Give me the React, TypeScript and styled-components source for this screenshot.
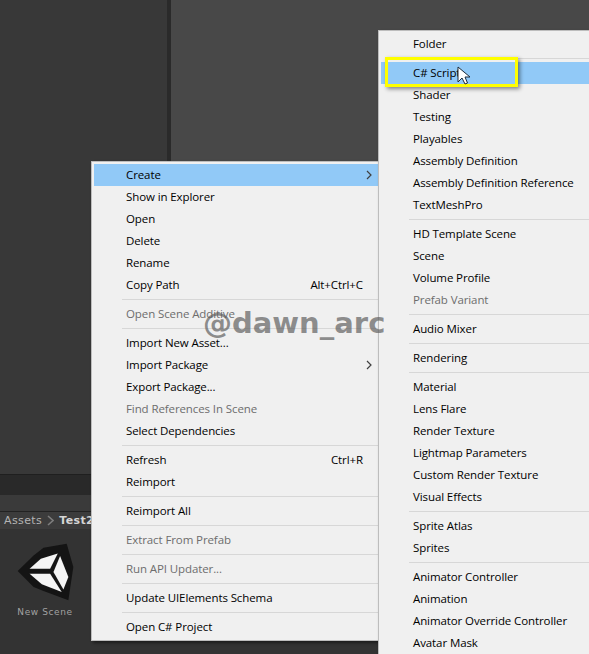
import React from 'react';
import styled, { createGlobalStyle } from 'styled-components';

const GlobalStyle = createGlobalStyle`
  html, body {
    margin: 0;
    padding: 0;
    overflow: hidden;
  }
`;

const Screen = styled.div`
  position: relative;
  width: 589px;
  height: 654px;
  overflow: hidden;
  background: #484848;
  font-family: 'Open Sans', 'Liberation Sans', sans-serif;
`;

const TopArea = styled.div`
  display: flex;
  height: 474px;
`;

const LeftPane = styled.div`
  width: 167px;
  background: #383838;
`;

const Splitter = styled.div`
  width: 4px;
  background: #2a2a2a;
`;

const RightPane = styled.div`
  flex: 1;
  background: #484848;
`;

const BottomArea = styled.div`
  display: flex;
  flex-direction: column;
  height: 180px;
  background: #333333;
`;

const TabBar = styled.div`
  height: 20px;
  background: #292929;
  border-top: 1px solid #1f1f1f;
`;

const Toolbar = styled.div`
  height: 16px;
  background: #3a3a3a;
  border-bottom: 1px solid #222222;
`;

const Breadcrumb = styled.div`
  display: flex;
  align-items: center;
  height: 17px;
  padding-left: 4px;
  background: #3c3c3c;
  color: #b4b4b4;
  font-family: 'DejaVu Sans', sans-serif;
  font-size: 11px;
  letter-spacing: 0.4px;
`;

const CrumbArrow = styled.svg`
  margin: 0 5px;
`;

const Crumb = styled.b`
  color: #d6d6d6;
`;

const Asset = styled.div`
  display: flex;
  flex-direction: column;
  align-items: center;
  gap: 6px;
  width: 70px;
  margin: 14px 0 0 10px;
  color: #a2a2a2;
  font-family: 'DejaVu Sans', sans-serif;
  font-size: 9px;
  letter-spacing: 0.6px;
`;

const Menu = styled.div<{ $x: number; $y: number; $w: number }>`
  position: absolute;
  left: ${(p) => p.$x}px;
  top: ${(p) => p.$y}px;
  width: ${(p) => p.$w}px;
  box-sizing: border-box;
  padding: 2px 0 2px 2px;
  background: #f0f0f0;
  border: 1px solid #bdbdbd;
  box-shadow: 2px 2px 3px rgba(0, 0, 0, 0.45);
`;

const Row = styled.div<{ $active?: boolean; $disabled?: boolean }>`
  position: relative;
  display: flex;
  align-items: center;
  justify-content: space-between;
  height: 20px;
  padding: 0 15px 2px 32px;
  font-size: 11.5px;
  letter-spacing: -0.1px;
  white-space: nowrap;
  color: ${(p) => (p.$disabled ? '#6d6d6d' : '#000000')};
  background: ${(p) => (p.$active ? '#91c9f7' : 'transparent')};
`;

const Divider = styled.div`
  height: 1px;
  margin: 3px 0 3px 28px;
  background: #d7d7d7;
`;

const Chevron = styled.svg`
  position: absolute;
  right: 6px;
  top: 6px;
`;

const Highlight = styled.div`
  position: absolute;
  left: 385px;
  top: 57px;
  width: 133px;
  height: 30px;
  box-sizing: border-box;
  border: 3px solid #ffff00;
  box-shadow: 2px 2px 4px rgba(0, 0, 0, 0.45);
`;

const Watermark = styled.div`
  position: absolute;
  left: 203px;
  top: 306px;
  color: rgba(95, 95, 95, 0.7);
  font-family: 'DejaVu Sans', sans-serif;
  font-size: 29px;
  font-weight: 700;
  white-space: nowrap;
`;

const CursorIcon = styled.svg`
  position: absolute;
  left: 457px;
  top: 66px;
`;

type Item =
  | 'sep'
  | { label: string; active?: boolean; disabled?: boolean; sub?: boolean; keys?: string };

const mainItems: Item[] = [
  { label: 'Create', active: true, sub: true },
  { label: 'Show in Explorer' },
  { label: 'Open' },
  { label: 'Delete' },
  { label: 'Rename' },
  { label: 'Copy Path', keys: 'Alt+Ctrl+C' },
  'sep',
  { label: 'Open Scene Additive', disabled: true },
  'sep',
  { label: 'Import New Asset...' },
  { label: 'Import Package', sub: true },
  { label: 'Export Package...' },
  { label: 'Find References In Scene', disabled: true },
  { label: 'Select Dependencies' },
  'sep',
  { label: 'Refresh', keys: 'Ctrl+R' },
  { label: 'Reimport' },
  'sep',
  { label: 'Reimport All' },
  'sep',
  { label: 'Extract From Prefab', disabled: true },
  'sep',
  { label: 'Run API Updater...', disabled: true },
  'sep',
  { label: 'Update UIElements Schema' },
  'sep',
  { label: 'Open C# Project' },
];

const createItems: Item[] = [
  { label: 'Folder' },
  'sep',
  { label: 'C# Script', active: true },
  { label: 'Shader' },
  { label: 'Testing' },
  { label: 'Playables' },
  { label: 'Assembly Definition' },
  { label: 'Assembly Definition Reference' },
  { label: 'TextMeshPro' },
  'sep',
  { label: 'HD Template Scene' },
  { label: 'Scene' },
  { label: 'Volume Profile' },
  { label: 'Prefab Variant', disabled: true },
  'sep',
  { label: 'Audio Mixer' },
  'sep',
  { label: 'Rendering' },
  'sep',
  { label: 'Material' },
  { label: 'Lens Flare' },
  { label: 'Render Texture' },
  { label: 'Lightmap Parameters' },
  { label: 'Custom Render Texture' },
  { label: 'Visual Effects' },
  'sep',
  { label: 'Sprite Atlas' },
  { label: 'Sprites' },
  'sep',
  { label: 'Animator Controller' },
  { label: 'Animation' },
  { label: 'Animator Override Controller' },
  { label: 'Avatar Mask' },
];

const MenuRows = ({ items }: { items: Item[] }) => (
  <>
    {items.map((item, i) =>
      item === 'sep' ? (
        <Divider key={i} />
      ) : (
        <Row key={i} $active={item.active} $disabled={item.disabled}>
          <span>{item.label}</span>
          {item.keys && <span>{item.keys}</span>}
          {item.sub && (
            <Chevron width="6" height="10" viewBox="0 0 6 10">
              <path d="M1 1 L5 5 L1 9" fill="none" stroke="#404040" strokeWidth="1.2" />
            </Chevron>
          )}
        </Row>
      ),
    )}
  </>
);

const UnityLogo = () => (
  <svg width="57" height="58" viewBox="50 248 172 174">
    <path
      d="M52 332 L100 285 L130 262 L200 250 L220 320 L205 420 L130 392 L100 380 Z"
      fill="#141414"
    />
    <path d="M88 325 L122 295 L173 279 L150 325 Z" fill="#f4f4f4" />
    <path d="M180 287 L205 350 L190 388 L160 335 Z" fill="#f4f4f4" />
    <path d="M88 340 L150 340 L185 395 L125 372 Z" fill="#f4f4f4" />
  </svg>
);

const App = () => {
  return (
    <Screen>
      <GlobalStyle />
      <TopArea>
        <LeftPane />
        <Splitter />
        <RightPane />
      </TopArea>
      <BottomArea>
        <TabBar />
        <Toolbar />
        <Breadcrumb>
          Assets
          <CrumbArrow width="7" height="11" viewBox="0 0 7 11">
            <path d="M1 1 L6 5.5 L1 10" fill="none" stroke="#7d7d7d" strokeWidth="1.6" />
          </CrumbArrow>
          <Crumb>Test2</Crumb>
        </Breadcrumb>
        <Asset>
          <UnityLogo />
          <span>New Scene</span>
        </Asset>
      </BottomArea>
      <Menu $x={91} $y={161} $w={288}>
        <MenuRows items={mainItems} />
      </Menu>
      <Menu $x={378} $y={30} $w={230}>
        <MenuRows items={createItems} />
      </Menu>
      <Watermark>@dawn_arc</Watermark>
      <Highlight />
      <CursorIcon width="15" height="20" viewBox="0 0 15 20">
        <path d="M1 1 L1 16 L5 12 L8 18 L10.5 17 L8 11 L13 11 Z" fill="#ffffff" stroke="#1c2a3a" strokeWidth="1" />
      </CursorIcon>
    </Screen>
  );
};

export default App;
